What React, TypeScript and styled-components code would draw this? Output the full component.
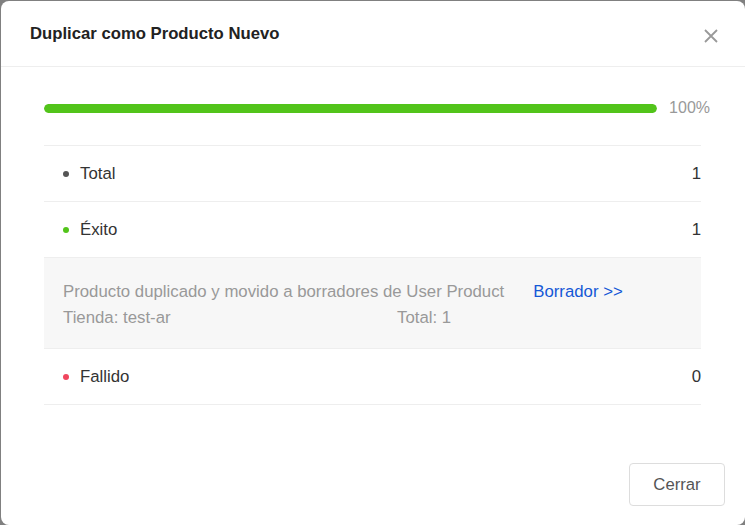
import styled, { createGlobalStyle } from "styled-components";

const GlobalStyle = createGlobalStyle`
  html, body {
    margin: 0;
    padding: 0;
    background: #808080;
    font-family: "Liberation Sans", Arial, sans-serif;
  }
  #root {
    width: 745px;
    height: 525px;
    overflow: hidden;
  }
`;

const Overlay = styled.div`
  width: 745px;
  height: 525px;
  padding: 1px 0 0 1px;
  box-sizing: border-box;
`;

const Modal = styled.div`
  width: 744px;
  height: 524px;
  background: #fff;
  border-radius: 8px;
  display: flex;
  flex-direction: column;
  box-sizing: border-box;
`;

const Header = styled.div`
  height: 65px;
  border-bottom: 1px solid #eeeeee;
  display: flex;
  align-items: center;
  justify-content: space-between;
  padding: 0 26px 0 29px;
  flex-shrink: 0;
`;

const Title = styled.div`
  font-size: 16.7px;
  font-weight: bold;
  color: #222;
`;

const CloseBtn = styled.button`
  border: none;
  background: none;
  padding: 0;
  width: 16px;
  height: 16px;
  margin-top: 5px;
  cursor: pointer;
  display: grid;
  place-content: center;
`;

const Body = styled.div`
  flex: 1;
  padding: 31px 44px 0 43px;
`;

const ProgressRow = styled.div`
  height: 20px;
  display: flex;
  align-items: center;
  gap: 11px;
  margin-bottom: 27px;
`;

const Track = styled.div`
  flex: 1;
  height: 9px;
  border-radius: 5px;
  background: #f0f0f0;
  overflow: hidden;
`;

const Fill = styled.div`
  height: 100%;
  background: #52c41a;
  border-radius: 5px;
`;

const Percent = styled.span`
  font-size: 16px;
  color: #999;
  width: 42px;
  text-align: right;
  margin-right: -9px;
`;

const List = styled.div`
  border-top: 1px solid #eeeeee;
`;

const Row = styled.div`
  height: 55px;
  border-bottom: 1px solid #eeeeee;
  display: flex;
  align-items: center;
  justify-content: space-between;
  padding: 0 0 0 19px;
  font-size: 16.8px;
  color: #333;
`;

const Label = styled.span`
  display: flex;
  align-items: center;
  gap: 11px;
`;

const Dot = styled.span<{ color: string }>`
  width: 6px;
  height: 6px;
  border-radius: 50%;
  background: ${(p) => p.color};
`;

const Detail = styled.div`
  background: #f7f7f7;
  padding: 21px 19px 17px;
  border-bottom: 1px solid #eeeeee;
  font-size: 16.8px;
  color: #999;
  line-height: 26px;
`;

const DetailLine = styled.div`
  display: flex;
`;

const DetailCell = styled.span<{ w?: number }>`
  ${(p) => (p.w ? `width: ${p.w}px;` : "")}
`;

const Link = styled.a`
  color: #1558d6;
  margin-left: 29px;
  text-decoration: none;
  cursor: pointer;
`;

const Footer = styled.div`
  display: flex;
  justify-content: flex-end;
  padding: 0 20px 19px 0;
`;

const Button = styled.button`
  width: 96px;
  height: 43px;
  border: 1px solid #dddddd;
  border-radius: 4px;
  background: #fff;
  font-family: "Liberation Sans", Arial, sans-serif;
  font-size: 16.7px;
  color: #555;
  cursor: pointer;
`;

export default function App() {
  return (
    <>
      <GlobalStyle />
      <Overlay>
        <Modal>
          <Header>
            <Title>Duplicar como Producto Nuevo</Title>
            <CloseBtn aria-label="Cerrar">
              <svg width="14" height="14" viewBox="0 0 14 14">
                <path d="M1 1L13 13M13 1L1 13" stroke="#999" strokeWidth="1.8" />
              </svg>
            </CloseBtn>
          </Header>
          <Body>
            <ProgressRow>
              <Track>
                <Fill style={{ width: "100%" }} />
              </Track>
              <Percent>100%</Percent>
            </ProgressRow>
            <List>
              <Row>
                <Label>
                  <Dot color="#555" />
                  Total
                </Label>
                <span>1</span>
              </Row>
              <Row>
                <Label>
                  <Dot color="#52c41a" />
                  Éxito
                </Label>
                <span>1</span>
              </Row>
              <Detail>
                <DetailLine>
                  <DetailCell>Producto duplicado y movido a borradores de User Product</DetailCell>
                  <Link>Borrador &gt;&gt;</Link>
                </DetailLine>
                <DetailLine>
                  <DetailCell w={334}>Tienda: test-ar</DetailCell>
                  <DetailCell>Total: 1</DetailCell>
                </DetailLine>
              </Detail>
              <Row>
                <Label>
                  <Dot color="#f0465e" />
                  Fallido
                </Label>
                <span>0</span>
              </Row>
            </List>
          </Body>
          <Footer>
            <Button>Cerrar</Button>
          </Footer>
        </Modal>
      </Overlay>
    </>
  );
}
